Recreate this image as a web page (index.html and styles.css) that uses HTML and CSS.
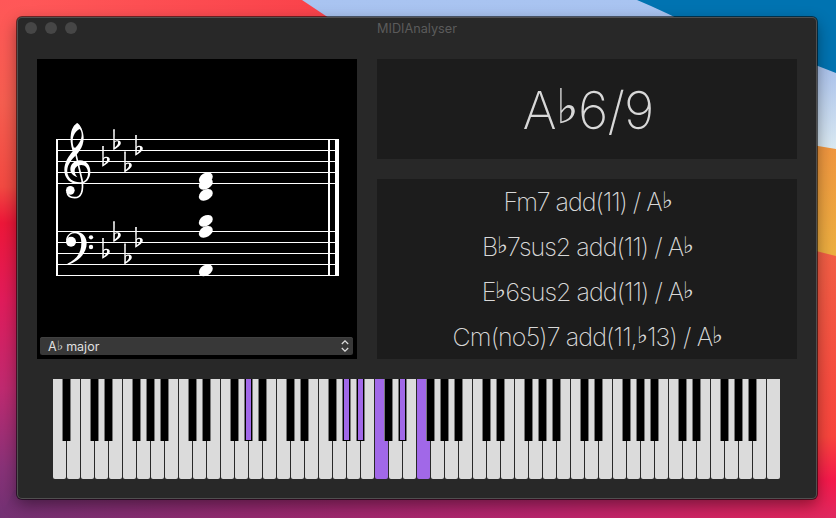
FILE: index.html
```html
<!DOCTYPE html>
<html lang="en">
<head>
<meta charset="utf-8">
<title>MIDIAnalyser</title>
<link rel="stylesheet" href="styles.css">
</head>
<body>
<svg class="wallpaper" viewBox="0 0 836 518" aria-hidden="true">
  <defs>
    <linearGradient id="warm" x1="0" y1="0" x2="0" y2="1">
      <stop offset="0" stop-color="#ff5758"/><stop offset=".2" stop-color="#f65e50"/>
      <stop offset=".36" stop-color="#f34a42"/><stop offset=".43" stop-color="#ee1739"/>
      <stop offset=".58" stop-color="#e11c5b"/><stop offset=".75" stop-color="#c02a70"/>
      <stop offset=".9" stop-color="#8a3278"/><stop offset="1" stop-color="#713173"/>
    </linearGradient>
    <linearGradient id="topred" x1="0" y1="0" x2="1" y2="0">
      <stop offset="0" stop-color="#ff5758"/><stop offset="1" stop-color="#f83b46"/>
    </linearGradient>
    <linearGradient id="floor" x1="0" y1="0" x2="1" y2="0">
      <stop offset="0" stop-color="#743173"/><stop offset=".3" stop-color="#94296f"/>
      <stop offset=".65" stop-color="#ba246c"/><stop offset="1" stop-color="#e3245b"/>
    </linearGradient>
    <linearGradient id="sky" x1="0" y1="0" x2="0" y2="1">
      <stop offset="0" stop-color="#a9c4f1"/><stop offset=".4" stop-color="#a7bfeb"/><stop offset="1" stop-color="#dbeaf2"/>
    </linearGradient>
    <linearGradient id="amber" x1="0" y1="0" x2="0" y2="1">
      <stop offset="0" stop-color="#f0953f"/><stop offset="1" stop-color="#edaf40"/>
    </linearGradient>
    <linearGradient id="coral" x1="0" y1="0" x2="0" y2="1">
      <stop offset="0" stop-color="#f25f45"/><stop offset=".7" stop-color="#f9453d"/>
      <stop offset=".86" stop-color="#f6194b"/><stop offset="1" stop-color="#df285f"/>
    </linearGradient>
  </defs>
  <rect width="836" height="518" fill="url(#warm)"/>
  <path d="M30 0H420V40H30Z" fill="url(#topred)"/>
  <path d="M14 490H836V518H0Z" fill="url(#floor)"/>
  <path d="M302 0H836V150L800 144L600 100L350 32Z" fill="url(#sky)"/>
  <path d="M637 0H836V73L800 59L700 30Q666 12 637 0Z" fill="#0073b1"/>
  <path d="M800 143L836 149V257L800 248Z" fill="url(#amber)"/>
  <path d="M800 247L836 256V518H800Z" fill="url(#coral)"/>
</svg>

<main class="window">
  <header class="titlebar">
    <div class="lights"><i></i><i></i><i></i></div>
    <h1>MIDIAnalyser</h1>
  </header>
  <div class="content">
    <div class="top">
      <section class="score">
        <svg class="staff" viewBox="37 59 320 278">
          <defs>
            <g id="flat">
              <path d="M-.8 0H.8L.6 19.8L-.6 20.5Z"/>
              <path fill-rule="evenodd" d="M0 12.3C2.5 10.1 6.8 10.3 6.8 13.6C6.8 16.4 3 18.4 -.5 20.7ZM.6 13.2L.5 18.4C2.4 16.8 4.1 15.3 4.1 13.3C4.1 11.5 2 11.8 .6 13.2Z"/>
            </g>
            <ellipse id="note" rx="7.5" ry="5.2" transform="rotate(-31)"/>
          </defs>
          <g class="ink">
            <path d="M56 139H338v1H56zM56 150H338v1H56zM56 161H338v1H56zM56 172H338v1H56zM56 183H338v1H56z"/>
            <path d="M56 231H338v1H56zM56 242H338v1H56zM56 253H338v1H56zM56 264H338v1H56zM56 275H338v1H56z"/>
            <path d="M56 139h2v137h-2zM328 139h2v137h-2zM335 139h4v137h-4z"/>
            <g transform="translate(40 115) scale(.33333)">
              <path fill-rule="evenodd" d="M112 24C122 30 131 50 131 68C131 100 110 118 99 130C86 145 81 158 82 172C84 192 100 202 118 202C135 202 144 190 144 174C144 160 136 150 124 150C111 150 104 159 104 168C104 178 110 184 113 187C100 184 91 174 91 163C91 148 103 136 120 136C140 136 151 152 151 170C151 192 138 207 116 207C90 207 73 190 73 165C73 143 85 125 98 109C92 90 90 70 93 55C96 38 104 28 112 24ZM119 42C108 46 98 62 98 78C98 88 100 95 103 101C115 90 125 75 125 60C125 52 123 45 119 42Z"/>
              <path class="stem" d="M103 98L126 195C131 228 124 248 104 248C90 248 82 240 81 230"/>
              <circle cx="91" cy="226" r="13"/>
              <path d="M78 378C78 360 92 350 107 350C129 350 140 366 140 385C140 415 116 440 83 449L82 446C108 434 124 415 124 385C124 366 118 355 105 355C94 355 87 361 84 369Z"/>
              <circle cx="93" cy="380" r="15"/>
              <circle cx="153" cy="367" r="6.5"/><circle cx="153" cy="396" r="6.5"/>
            </g>
            <use href="#flat" x="103" y="146"/><use href="#flat" x="114" y="129.3"/><use href="#flat" x="125" y="151.6"/><use href="#flat" x="136" y="135"/>
            <use href="#flat" x="103" y="238"/><use href="#flat" x="114" y="221.3"/><use href="#flat" x="125" y="243.6"/><use href="#flat" x="136" y="227"/>
            <use href="#note" x="205.8" y="178.3"/><use href="#note" x="205.8" y="183.8"/><use href="#note" x="205.8" y="194.8"/>
            <use href="#note" x="205.8" y="220.8"/><use href="#note" x="205.8" y="231.8"/><use href="#note" x="205.8" y="270.3"/>
          </g>
        </svg>
        <div class="picker">
          <span>A<b>♭</b> major</span>
          <svg class="chevrons" viewBox="0 0 8 12"><path d="M.8 4L4 .9L7.2 4M.8 8L4 11.1L7.2 8"/></svg>
        </div>
      </section>
      <div class="chords">
        <section class="main-chord"><span>A<b>♭</b>6/9</span></section>
        <section class="alternatives">
          <p class="alt-1">Fm7 add(11) / A<b>♭</b></p>
          <p class="alt-2">B<b>♭</b>7sus2 add(11) / A<b>♭</b></p>
          <p class="alt-3">E<b>♭</b>6sus2 add(11) / A<b>♭</b></p>
          <p class="alt-4">Cm(no5)7 add(11,<b>♭</b>13) / A<b>♭</b></p>
        </section>
      </div>
    </div>
    <div class="keyboard" id="keyboard"></div>
  </div>
</main>
<script src="keyboard.js"></script>
</body>
</html>
```
FILE: styles.css
```css
* { box-sizing: border-box; }
body {
  margin: 0;
  width: 836px;
  height: 518px;
  padding: 17px 19px 19px 17px;
  overflow: hidden;
  position: relative;
  font-family: Inter, "DejaVu Sans", sans-serif;
}
.wallpaper { position: absolute; inset: 0; width: 836px; height: 518px; }
.window {
  position: relative;
  width: 800px;
  height: 482px;
  border-radius: 5px;
  background: #282828;
  box-shadow: inset 0 0 0 1px #505050, 0 0 0 1px rgba(0,0,0,.55), 0 6px 16px rgba(0,0,0,.42);
}
.titlebar {
  height: 22px;
  padding: 0 8px;
  display: grid;
  grid-template-columns: 60px 1fr 60px;
  align-items: center;
}
.lights { display: flex; gap: 8px; }
.lights i { width: 12px; height: 12px; border-radius: 50%; background: #464646; }
.titlebar h1 {
  margin: 0;
  padding-top: 2px;
  text-align: center;
  font-size: 12.7px;
  font-weight: 400;
  line-height: 20px;
  color: #5b5b5b;
}
.content { padding: 20px; }
.top { display: flex; gap: 20px; height: 300px; }
.score { width: 320px; background: #000; }
.staff { display: block; width: 320px; height: 278px; }
.ink { fill: #fff; }
.stem { fill: none; stroke: #fff; stroke-width: 5; }
.picker {
  display: flex;
  align-items: center;
  justify-content: space-between;
  width: 313px;
  height: 18px;
  margin-left: 3px;
  padding: 0 4px 0 8px;
  border-radius: 2.5px;
  background: #383838;
  box-shadow: inset 0 1px #404040;
  color: #e0e0e0;
  font-size: 12.5px;
  line-height: 18px;
}
.picker span { padding-top: 1px; }
.picker b { top: -1px; font-size: 1em; }
.chevrons { width: 8px; height: 12px; fill: none; stroke: #ddd; stroke-width: 1.3; }
.chords { width: 420px; display: flex; flex-direction: column; gap: 20px; }
.main-chord, .alternatives { background: #1c1c1c; color: #d8d8d8; text-align: center; }
.main-chord { height: 100px; padding-left: 2px; line-height: 103px; font-size: 52px; font-weight: 200; letter-spacing: -.8px; }
.alternatives { height: 180px; padding-left: 1px; font-size: 25px; font-weight: 200; }
.alternatives p { margin: 0; height: 45px; line-height: 47px; white-space: pre; letter-spacing: -.98px; }
.alternatives .alt-1 { letter-spacing: -1.05px; }
.alternatives .alt-4 { letter-spacing: -.88px; }
b {
  position: relative;
  top: -.13em;
  font-family: "DejaVu Sans", sans-serif;
  font-size: .93em;
  font-weight: 200;
  line-height: 0;
}
.keyboard { display: flex; gap: 1px; width: 728px; height: 100px; margin: 20px 0 0 16px; }
.white { position: relative; width: 13px; height: 100px; border-radius: 0 0 2px 2px; background: #dbdbdb; }
.black {
  position: absolute;
  z-index: 1;
  top: 0;
  left: 9px;
  width: 9px;
  height: 62px;
  border: solid #777;
  border-width: 0 1px;
  background: #000;
}
.white.on { background: #a168e8; }
.black.on::before {
  content: "";
  display: block;
  width: 5px;
  height: 61px;
  margin-left: 1px;
  background: #a168e8;
}
```
FILE: keyboard.js
```js
const WHITE_KEYS = 52;
const SHARP_AFTER = [0, 2, 3, 5, 6]; // A C D F G
const whitesOn = [23, 26];
const blacksOn = [13, 20, 21, 24];

const keyboard = document.getElementById("keyboard");
for (let i = 0; i < WHITE_KEYS; i++) {
  const key = document.createElement("div");
  key.className = whitesOn.includes(i) ? "white on" : "white";
  if (i < WHITE_KEYS - 1 && SHARP_AFTER.includes(i % 7)) {
    const sharp = document.createElement("div");
    sharp.className = blacksOn.includes(i) ? "black on" : "black";
    key.append(sharp);
  }
  keyboard.append(key);
}
```
